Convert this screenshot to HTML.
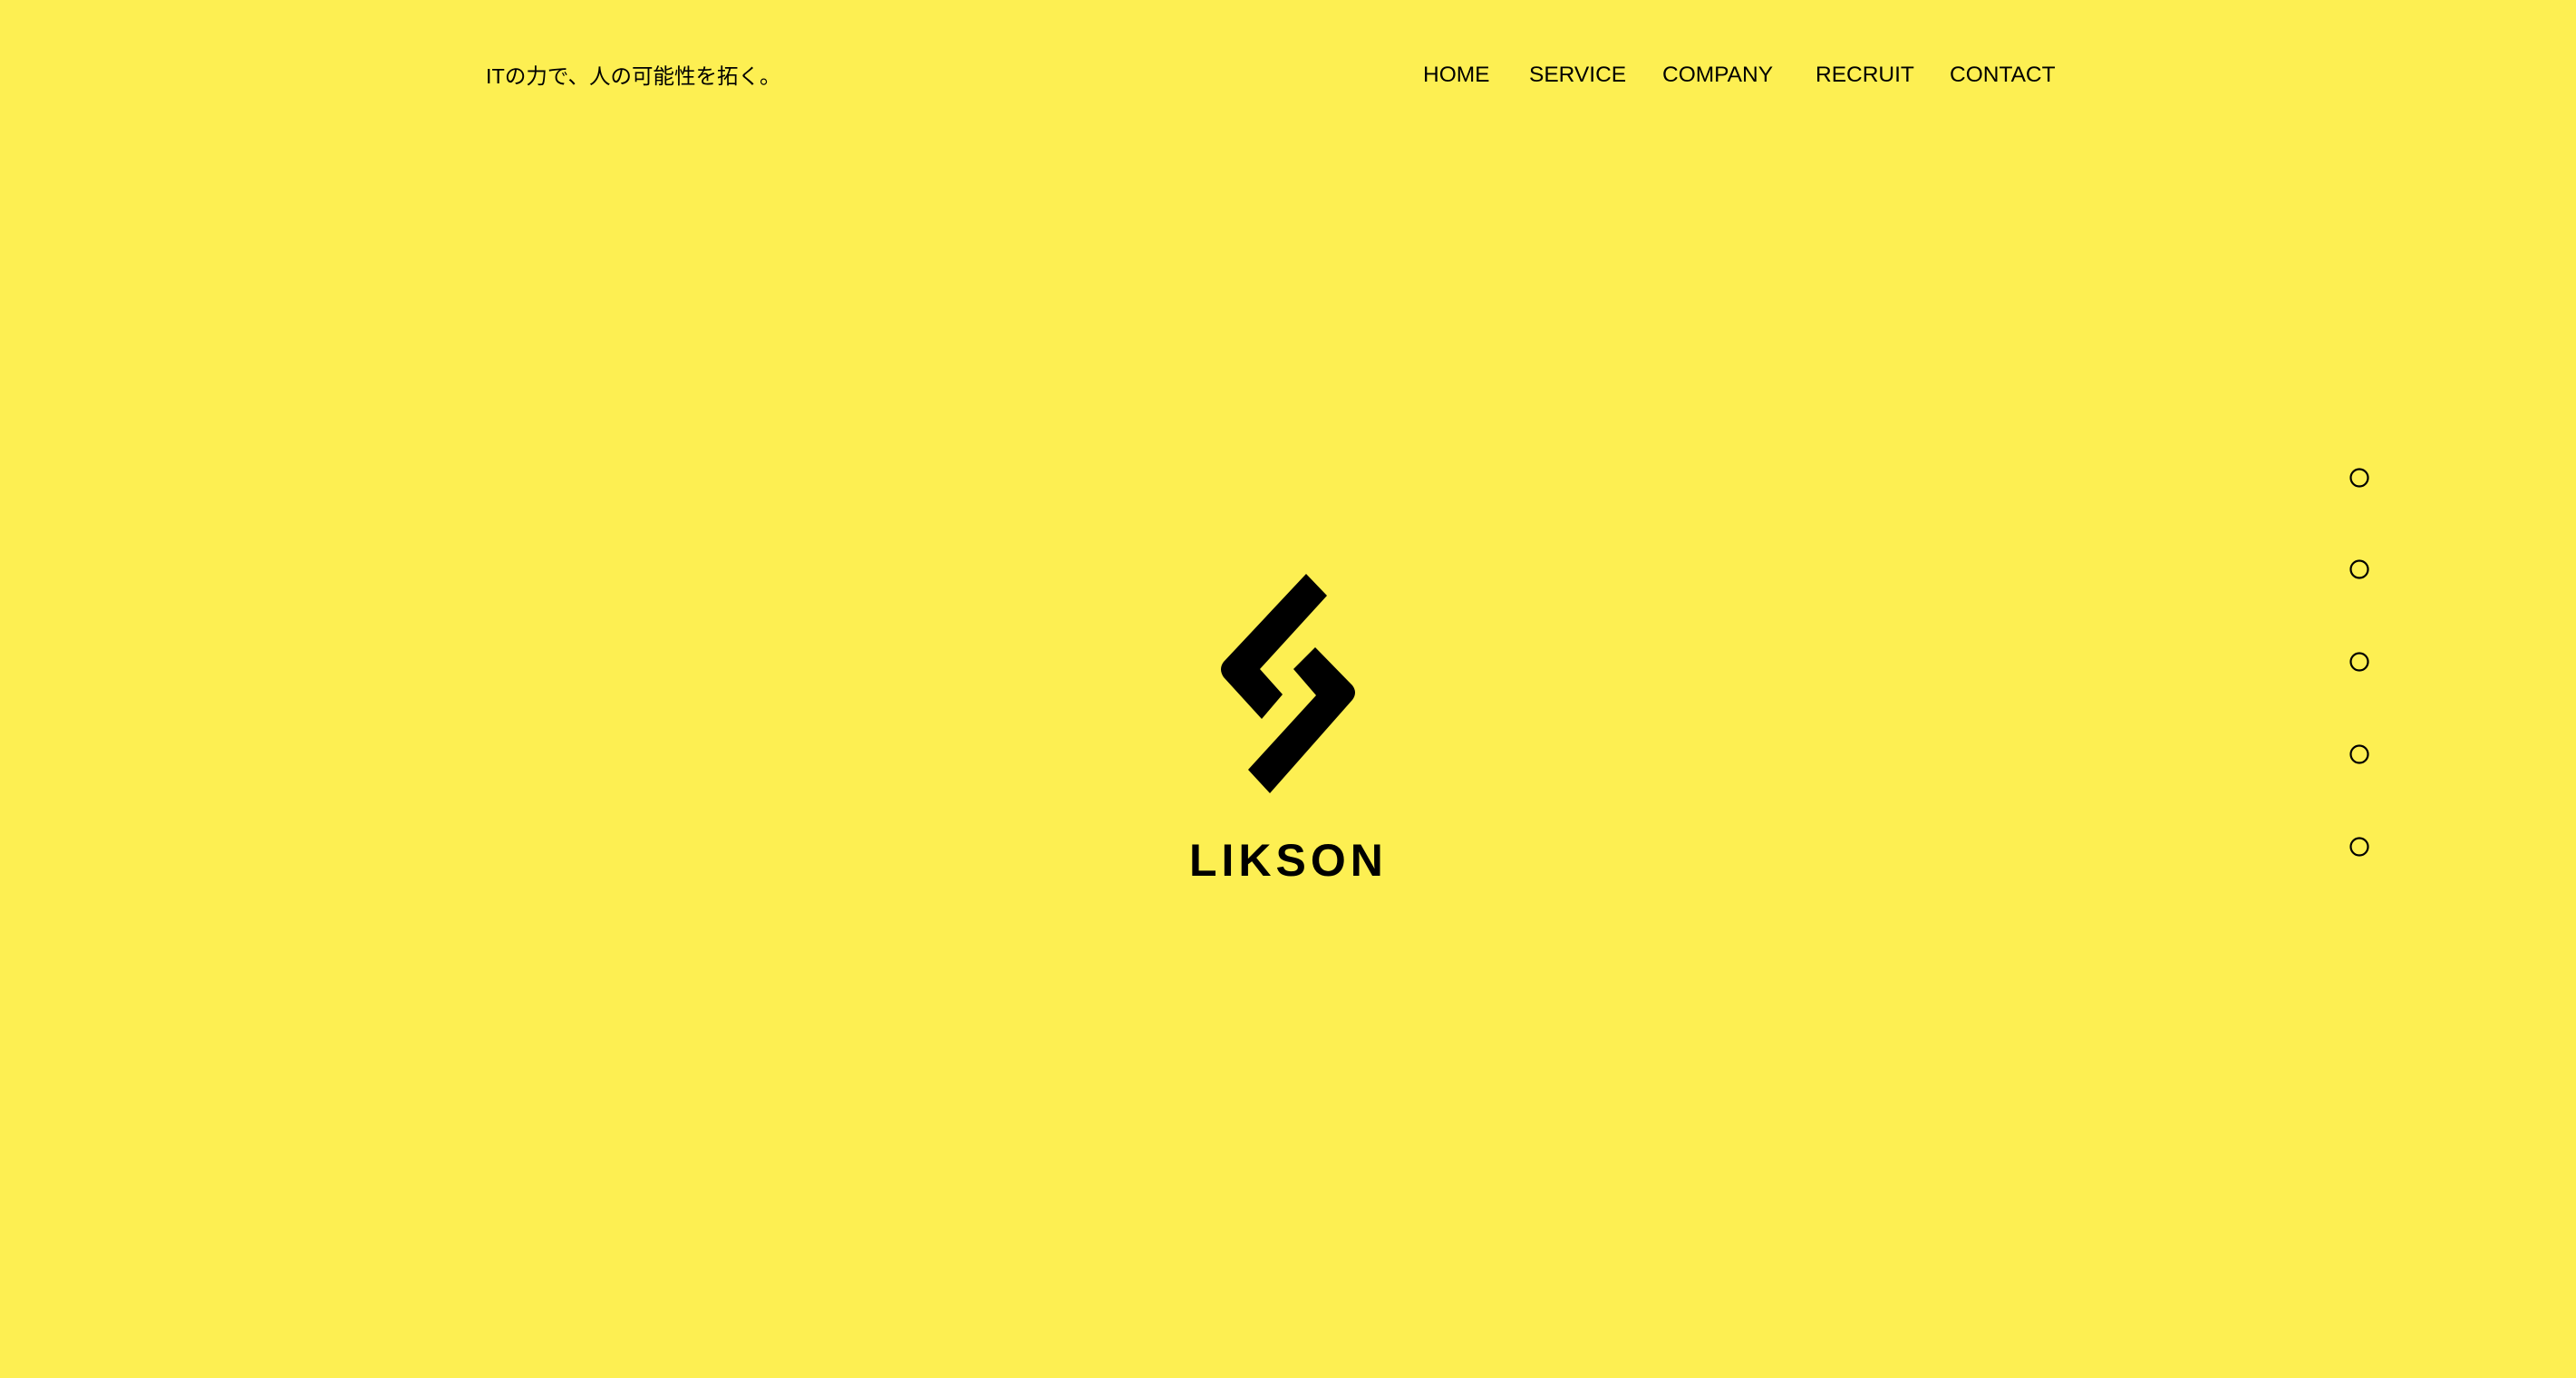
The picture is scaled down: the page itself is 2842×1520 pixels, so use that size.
<!DOCTYPE html>
<html><head><meta charset="utf-8"><style>
html,body{margin:0;padding:0;width:2842px;height:1520px;background:#fdef52;overflow:hidden;font-family:"Liberation Sans","Noto Sans CJK JP",sans-serif;color:#000}
.tag{position:absolute;left:536px;top:68px;font-size:23.5px;line-height:32px;white-space:nowrap}
.nav a{position:absolute;top:66px;font-size:24.5px;line-height:34px;color:#000;text-decoration:none;white-space:nowrap}
.name{position:absolute;left:1312px;top:920px;font-size:50px;font-weight:bold;letter-spacing:5px;line-height:58px}
</style></head><body>
<div class="tag">ITの力で、人の可能性を拓く。</div>
<div class="nav">
<a style="left:1570px">HOME</a>
<a style="left:1687px">SERVICE</a>
<a style="left:1834px">COMPANY</a>
<a style="left:2003px">RECRUIT</a>
<a style="left:2151px">CONTACT</a>
</div>
<svg width="2842" height="1520" style="position:absolute;left:0;top:0">
<path d="M1441,633 L1464,657 L1390,738 L1415,766 L1392,793 L1350,747 Q1344,738 1350,730 Z" fill="#000"/>
<path d="M1451,714 L1492,756 Q1498,764 1492,772 L1401,875 L1377,849 L1452,767 L1427,738 Z" fill="#000"/>
<g fill="none" stroke="#000" stroke-width="2.2">
<circle cx="2603" cy="527" r="9.5"/>
<circle cx="2603" cy="628" r="9.5"/>
<circle cx="2603" cy="730" r="9.5"/>
<circle cx="2603" cy="832" r="9.5"/>
<circle cx="2603" cy="934" r="9.5"/>
</g>
</svg>
<div class="name">LIKSON</div>
</body></html>
